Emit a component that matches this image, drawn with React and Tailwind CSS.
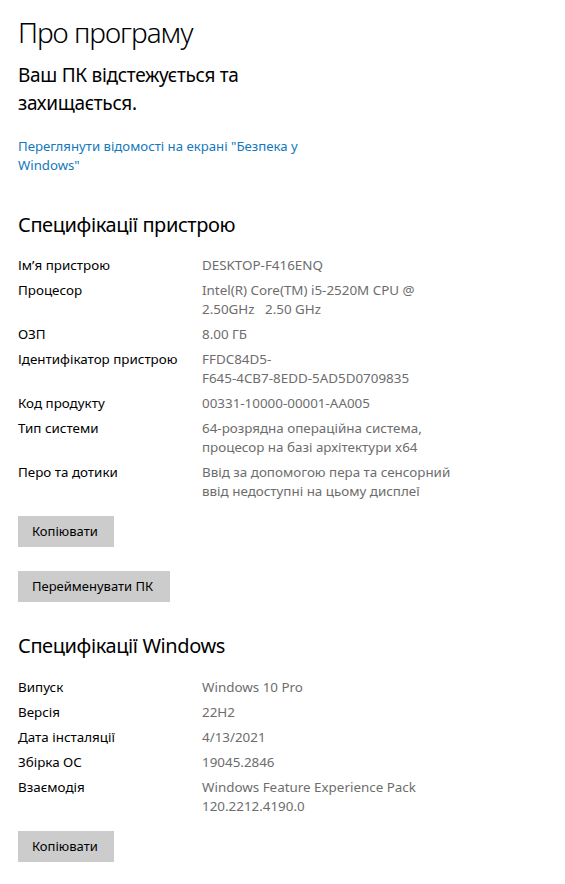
import React from "react";

const deviceSpecs = [
  ["Ім’я пристрою", ["DESKTOP-F416ENQ"]],
  ["Процесор", ["Intel(R) Core(TM) i5-2520M CPU @", "2.50GHz   2.50 GHz"]],
  ["ОЗП", ["8.00 ГБ"]],
  ["Ідентифікатор пристрою", ["FFDC84D5-", "F645-4CB7-8EDD-5AD5D0709835"]],
  ["Код продукту", ["00331-10000-00001-AA005"]],
  ["Тип системи", ["64-розрядна операційна система,", "процесор на базі архітектури x64"]],
  ["Перо та дотики", ["Ввід за допомогою пера та сенсорний", "ввід недоступні на цьому дисплеї"]],
];

const windowsSpecs = [
  ["Випуск", ["Windows 10 Pro"]],
  ["Версія", ["22H2"]],
  ["Дата інсталяції", ["4/13/2021"]],
  ["Збірка ОС", ["19045.2846"]],
  ["Взаємодія", ["Windows Feature Experience Pack", "120.2212.4190.0"]],
];

const SpecList = ({ items }) => (
  <div className="flex flex-col gap-[6px]">
    {items.map(([label, lines]) => (
      <div key={label} className="flex text-[13.4px] leading-[19px]">
        <div className="w-[184px] shrink-0 text-[#000]">{label}</div>
        <div className="text-[#6d6d6d] whitespace-pre">
          {lines.map((l) => (
            <div key={l}>{l}</div>
          ))}
        </div>
      </div>
    ))}
  </div>
);

const GrayButton = ({ children, className }) => (
  <button
    type="button"
    className={`h-[31px] bg-[#cccccc] px-[14px] text-[13px] text-[#000] text-left ${className}`}
  >
    {children}
  </button>
);

export default function App() {
  return (
    <div className="min-h-screen w-full bg-white px-[18px] pt-[14px] pb-[20px] font-['Noto_Sans',sans-serif]">
      <h1 className="text-[28px] leading-[36px] font-light tracking-[-1px] text-[#000]">Про програму</h1>

      <p className="mt-[11px] text-[19px] leading-[28px] tracking-[-0.3px] text-[#000] max-w-[280px]">
        Ваш ПК відстежується та захищається.
      </p>

      <a href="#" className="mt-[20px] block text-[13.2px] leading-[19px] text-[#1378bd] max-w-[300px]">
        Переглянути відомості на екрані "Безпека у Windows"
      </a>

      <h2 className="mt-[36px] text-[20px] leading-[28px] tracking-[-0.4px] text-[#000]">Специфікації пристрою</h2>

      <div className="mt-[17px]">
        <SpecList items={deviceSpecs} />
      </div>

      <div className="mt-[15px] flex flex-col items-start gap-[24px]">
        <GrayButton className="w-[96px]">Копіювати</GrayButton>
        <GrayButton className="w-[152px]">Перейменувати ПК</GrayButton>
      </div>

      <h2 className="mt-[30px] text-[20px] leading-[28px] tracking-[-0.4px] text-[#000]">Специфікації Windows</h2>

      <div className="mt-[18px]">
        <SpecList items={windowsSpecs} />
      </div>

      <div className="mt-[15px]">
        <GrayButton className="w-[96px]">Копіювати</GrayButton>
      </div>
    </div>
  );
}
